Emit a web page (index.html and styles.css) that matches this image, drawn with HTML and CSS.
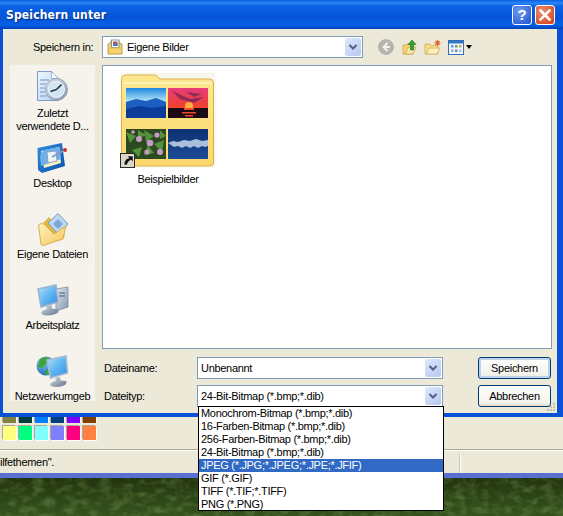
FILE: index.html
```html
<!DOCTYPE html>
<html lang="de">
<head>
<meta charset="utf-8">
<title>Speichern unter</title>
<link rel="stylesheet" href="styles.css">
</head>
<body>
<div class="screen">
  <svg class="defs" width="0" height="0">
    <defs>
      <linearGradient id="screenblue" x1="0" y1="0" x2="1" y2="1"><stop offset="0" stop-color="#b4e2fb"/><stop offset=".5" stop-color="#5fb6f2"/><stop offset="1" stop-color="#2f8ee0"/></linearGradient>
      <linearGradient id="steel" x1="0" y1="0" x2="1" y2="1"><stop offset="0" stop-color="#e3e9f2"/><stop offset="1" stop-color="#8494ac"/></linearGradient>
      <linearGradient id="stand" x1="0" y1="0" x2="1" y2="1"><stop offset="0" stop-color="#dde3ea"/><stop offset="1" stop-color="#5f7088"/></linearGradient>
      <linearGradient id="paper" x1="0" y1="0" x2="1" y2="1"><stop offset="0" stop-color="#eef5fd"/><stop offset="1" stop-color="#b7d0ee"/></linearGradient>
      <linearGradient id="yellow" x1="0" y1="0" x2="1" y2="1"><stop offset="0" stop-color="#fff3bf"/><stop offset="1" stop-color="#f3c659"/></linearGradient>
      <linearGradient id="dtblue" x1="0" y1="0" x2="1" y2="1"><stop offset="0" stop-color="#2e8fe0"/><stop offset="1" stop-color="#0d4ea8"/></linearGradient>
      <radialGradient id="globe" cx=".35" cy=".3" r=".8"><stop offset="0" stop-color="#7cc6ee"/><stop offset="1" stop-color="#1c5fb0"/></radialGradient>
      <linearGradient id="fold" x1="0" y1="0" x2="0" y2="1"><stop offset="0" stop-color="#fde88f"/><stop offset="1" stop-color="#fbd76c"/></linearGradient>
      <linearGradient id="sky" x1="0" y1="0" x2="0" y2="1"><stop offset="0" stop-color="#1c86de"/><stop offset=".4" stop-color="#a8dcf6"/><stop offset="1" stop-color="#5ea0d8"/></linearGradient>
      <linearGradient id="sun" x1="0" y1="0" x2="0" y2="1"><stop offset="0" stop-color="#e63c7a"/><stop offset=".6" stop-color="#f04030"/><stop offset="1" stop-color="#ff8030"/></linearGradient>
      <linearGradient id="wat" x1="0" y1="0" x2="0" y2="1"><stop offset="0" stop-color="#0e2f72"/><stop offset="1" stop-color="#1b4c98"/></linearGradient>
      <filter id="noise" x="0" y="0" width="100%" height="100%">
        <feTurbulence type="fractalNoise" baseFrequency=".09 .14" numOctaves="3" seed="4"/>
        <feColorMatrix type="matrix" values="0 0 0 0 .42  0 0 0 0 .62  0 0 0 0 .2  .6 0 0 0 -.25"/>
      </filter>
    </defs>
  </svg>
  <section class="dialog">
    <header class="titlebar">
      <h1 class="title">Speichern unter</h1>
      <div class="caption-buttons">
        <button class="cap cap-help">?</button>
        <button class="cap cap-close">
          <svg viewBox="0 0 20 20" width="20" height="20"><path d="M5.500 5.500l9 9M14.500 5.500l-9 9" stroke="#fff" stroke-width="2.600" stroke-linecap="square"/></svg>
        </button>
      </div>
    </header>
    <div class="client">
      <div class="toolbar">
        <span class="toolbar-label">Speichern in:</span>
        <div class="combo combo-location">
          <svg class="combo-icon" viewBox="0 0 16 16" width="16" height="16">
            <path d="M1 5h2v-2h10v2h2v10H1z" fill="#f6d36c" stroke="#b58a2c" stroke-width=".8"/>
            <rect x="4.500" y="1" width="7.500" height="7.500" fill="#fff" stroke="#5a7fa8" stroke-width=".8"/>
            <rect x="6" y="2.500" width="4.500" height="4.500" fill="#c8503c"/>
            <rect x="6" y="4.500" width="4.500" height="2.500" fill="#3f78c4"/>
            <path d="M1 9h14" stroke="#e6b84a"/>
          </svg>
          <span class="combo-text">Eigene Bilder</span>
          <span class="combo-arrow"><svg viewBox="0 0 16 18" width="16" height="18"><path d="M4.500 7l3.500 3.500L11.500 7" fill="none" stroke="#4d6185" stroke-width="2"/></svg></span>
        </div>
        <div class="tools">
          <svg class="tool-back" viewBox="0 0 16 16" width="16" height="16"><circle cx="8" cy="8" r="7.500" fill="#b5b5ae" stroke="#a3a39d" stroke-width=".6"/><path d="M9.500 4L5.500 8l4 4M6 8h6" fill="none" stroke="#f2f2ee" stroke-width="2"/></svg>
          <svg viewBox="0 0 16 16" width="16" height="16"><path d="M1 6h3l1-1h6v10H1z" fill="#f3d676" stroke="#c39f42" stroke-width=".7"/><path d="M3 15l3-7h8l-3 7z" fill="#f9e6a0" stroke="#c39f42" stroke-width=".7"/><path d="M10 1l4 4.500h-2.500V11h-3V5.500H6z" fill="#2fa32a" stroke="#1b6e1a" stroke-width=".6"/></svg>
          <svg viewBox="0 0 18 16" width="18" height="16"><path d="M1 5h5l1 1.500h7V15H1z" fill="#f6dd8c" stroke="#c9a850" stroke-width=".7"/><path d="M2 15l3-6h11l-3 6z" fill="#fbeeb6" stroke="#c9a850" stroke-width=".7"/><path d="M13.500 1v6M10.500 4h6M11.500 2l4 4M15.500 2l-4 4" stroke="#e2672a" stroke-width="1.100"/></svg>
          <div class="views">
            <svg viewBox="0 0 16 15" width="16" height="15"><rect x=".5" y=".5" width="15" height="14" fill="#f4f6fb" stroke="#2f6fb2"/><rect x="1" y="1" width="14" height="2.500" fill="#2f78c8"/><rect x="3" y="5" width="2.500" height="2.500" fill="#5a9bd0"/><rect x="7" y="5" width="2.500" height="2.500" fill="#5aa86a"/><rect x="11" y="5" width="2.500" height="2.500" fill="#d8a63c"/><rect x="3" y="9.500" width="2.500" height="2.500" fill="#a5a5b5"/><rect x="7" y="9.500" width="2.500" height="2.500" fill="#6f8fb8"/><rect x="11" y="9.500" width="2.500" height="2.500" fill="#c0c0c0"/></svg>
            <span class="views-caret"></span>
          </div>
        </div>
      </div>

      <div class="content">
        <nav class="places">
          <div class="place">
            <svg viewBox="0 0 32 34" width="32" height="34">
              <path d="M.5 1.500h14l7 7v22H.5z" fill="url(#paper)" stroke="#7f9cc4"/>
              <path d="M14.500 1.500v7h7z" fill="#fff" stroke="#7f9cc4" stroke-width=".7"/>
              <path d="M3 10h9M3 14h6M3 18h5M3 22h5M3 26h7" stroke="#8fb0dc" stroke-width="1.300"/>
              <circle cx="19.500" cy="19.500" r="11" fill="url(#steel)" stroke="#7c8798" stroke-width=".6"/>
              <circle cx="19.500" cy="19.500" r="8" fill="#cfe6f5" stroke="#f3f6f8"/>
              <path d="M19.500 19.500l5-5M19.500 19.500l-6 2" stroke="#2c3444" stroke-width="1.600"/>
            </svg>
            <span>Zuletzt<br>verwendete D...</span>
          </div>
          <div class="place">
            <svg viewBox="0 0 32 34" width="32" height="34">
              <path d="M.5 7L25 2l3 23L5 32 1 29z" fill="url(#dtblue)"/>
              <path d="M4 10l18-4 2 16-17 5z" fill="#f9f3c8"/>
              <path d="M3 16q1-8 9-8l11-2 1 12-9 3-8 3-3 1z" fill="#6fb0e8"/>
              <path d="M10 11l9-1 1 10-9 2z" fill="#eef4f8" stroke="#8aa6c0"/>
              <path d="M15 16l11-6" stroke="#7e9cc0" stroke-width="1.600"/>
              <circle cx="28" cy="9" r="2" fill="#c8303a"/>
            </svg>
            <span>Desktop</span>
          </div>
          <div class="place">
            <svg viewBox="0 0 32 34" width="32" height="34">
              <path d="M6 11l15 18 7-5L12 5z" fill="#e2b544"/>
              <path d="M11 11L21 1.500 31 12 21 22z" fill="#bcd8f2" stroke="#8098b8"/>
              <path d="M16 12l5-5 5 5-5 5z" fill="#7ea7d8"/>
              <path d="M1.500 13q3-3 6-.5L17 22l12-8-3 13-20 6.500-2-1z" fill="url(#yellow)" stroke="#c99f3c" stroke-width=".8"/>
            </svg>
            <span>Eigene Dateien</span>
          </div>
          <div class="place">
            <svg viewBox="0 0 34 34" width="34" height="34">
              <path d="M20 6l12-2v20l-12 4z" fill="url(#steel)" stroke="#7f8ca8" stroke-width=".8"/>
              <path d="M23 10h6M23 13h6" stroke="#6f7d99" stroke-width="1.300"/>
              <path d="M2 6L20 2l2 17-17 5z" fill="url(#screenblue)" stroke="#9fb2cc" stroke-width="1.500"/>
              <path d="M10 23l1 3q-5 1-6 4 1 2.500 6 2.500 7 0 11-3l1-3-7-1-.5-4z" fill="url(#stand)"/>
            </svg>
            <span>Arbeitsplatz</span>
          </div>
          <div class="place">
            <svg viewBox="0 0 34 34" width="34" height="34">
              <circle cx="10" cy="12" r="9.500" fill="url(#globe)"/>
              <path d="M4 5q5-3 9-.5L11 9l-5 5-4-1zM9 16l5 1-1 4-3 0z" fill="#3da63a"/>
              <path d="M11 6l19-4 1.500 17-17 5z" fill="url(#screenblue)" stroke="#a8bad2" stroke-width="1.600"/>
              <path d="M19 24l1 3q-5 1-6 3.500 1 2.500 6 2.500 7 0 10-3l.5-3-6-.5-.5-4z" fill="url(#stand)"/>
            </svg>
            <span class="clip">Netzwerkumgeb</span>
          </div>
        </nav>

        <div class="main">
          <div class="filelist">
            <figure class="file">
              <svg viewBox="0 0 96 96" width="96" height="96">
                <rect x=".5" y=".5" width="95" height="95" fill="#f7f5ec"/>
                <path d="M1.500 8q0-5 5-5h28q3 0 5 4h50q4 0 4 4v80q0 3-4 3H5q-3.500 0-3.500-3z" fill="url(#fold)" stroke="#d9b04a"/>
                <path d="M3 11h89" stroke="#fff3b8" stroke-width="2"/>
                <rect x="6" y="16" width="40" height="30" fill="url(#sky)"/>
                <path d="M6 30l10-3 10 2 10-3 10 4v16H6z" fill="#1d5fc0"/>
                <path d="M6 37l14-3 12 2 14-2v12H6z" fill="#0c3b9a"/>
                <rect x="48" y="16" width="40" height="30" fill="url(#sun)"/>
                <path d="M52 19l18 8 14-2-10 6-14-4zM66 20l16 2-8 3z" fill="#8e2a58"/>
                <circle cx="69" cy="34" r="4" fill="#ffb040"/>
                <path d="M48 36h40v10H48z" fill="#1d0a14"/>
                <path d="M64 36h10v2H64zM62 40h14v1.500H62zM65 43h8v1.500h-8z" fill="#f04828"/>
                <rect x="6" y="57" width="40" height="30" fill="#2b4a1f"/>
                <path d="M6 60l10 4-6 7zM18 58l8 5-8 4zM24 58l10 6-8 6zM34 72l10-4-2 12zM12 78l10-3-3 10zM28 73l6 8-10 2zM40 58l6 6-6 3z" fill="#55903c"/>
                <g fill="#c89ac8"><circle cx="19" cy="67" r="3"/><circle cx="30" cy="71" r="3.300"/><circle cx="37" cy="63" r="2.600"/><circle cx="27" cy="80" r="2.600"/><circle cx="40" cy="80" r="3"/><circle cx="13" cy="60" r="1.800"/></g>
                <rect x="48" y="57" width="40" height="30" fill="url(#wat)"/>
                <path d="M48 71l5-2 5 1 6-2 6 1 6-2 6 2 6-1v6l-3 1-3-1-4 2-4-2-4 2-4-2-4 2-4-2-4 1z" fill="#a8bedd"/>
                <rect x=".5" y="81.500" width="14" height="14" fill="#d8d6c8" stroke="#2a2a20"/>
                <path d="M4 93q0-6 5-7l-2-2h6v6l-2-2q-3 1-4 5z" fill="#111" stroke="#fff" stroke-width=".5"/>
              </svg>
              <figcaption>Beispielbilder</figcaption>
            </figure>
          </div>
          <div class="form">
            <label class="form-label">Dateiname:</label>
            <div class="combo"><span class="combo-text">Unbenannt</span><span class="combo-arrow"><svg viewBox="0 0 16 18" width="16" height="18"><path d="M4.500 7l3.500 3.500L11.500 7" fill="none" stroke="#4d6185" stroke-width="2"/></svg></span></div>
            <button class="btn btn-default">Speichern</button>
            <label class="form-label">Dateityp:</label>
            <div class="combo"><span class="combo-text">24-Bit-Bitmap (*.bmp;*.dib)</span><span class="combo-arrow"><svg viewBox="0 0 16 18" width="16" height="18"><path d="M4.500 7l3.500 3.500L11.500 7" fill="none" stroke="#4d6185" stroke-width="2"/></svg></span></div>
            <button class="btn">Abbrechen</button>
          </div>
        </div>
      </div>
      <svg class="grip" viewBox="0 0 10 10" width="10" height="10"><g fill="#c5c2b0"><rect x="7" y="1" width="2" height="2"/><rect x="4" y="4" width="2" height="2"/><rect x="7" y="4" width="2" height="2"/><rect x="1" y="7" width="2" height="2"/><rect x="4" y="7" width="2" height="2"/><rect x="7" y="7" width="2" height="2"/></g></svg>
    </div>
  </section>

  <section class="paint">
    <div class="palette">
      <div class="swatches swatches-dark">
        <i class="c-olive"></i><i class="c-teal"></i><i class="c-azure"></i><i class="c-navy"></i><i class="c-violet"></i><i class="c-brown"></i>
      </div>
      <div class="swatches">
        <i class="c-yellow"></i><i class="c-mint"></i><i class="c-cyan"></i><i class="c-peri"></i><i class="c-pink"></i><i class="c-orange"></i>
      </div>
    </div>
    <div class="statusbar">
      <span class="status-text">ilfethemen".</span>
      <span class="status-div"></span>
    </div>
  </section>
  <div class="grass">
    <svg class="grass-noise" width="563" height="38"><rect width="563" height="38" filter="url(#noise)"/></svg>
  </div>

  <ul class="dropdown">
    <li>Monochrom-Bitmap (*.bmp;*.dib)</li>
    <li>16-Farben-Bitmap (*.bmp;*.dib)</li>
    <li>256-Farben-Bitmap (*.bmp;*.dib)</li>
    <li>24-Bit-Bitmap (*.bmp;*.dib)</li>
    <li class="selected">JPEG (*.JPG;*.JPEG;*.JPE;*.JFIF)</li>
    <li>GIF (*.GIF)</li>
    <li>TIFF (*.TIF;*.TIFF)</li>
    <li>PNG (*.PNG)</li>
  </ul>
</div>
</body>
</html>
```

FILE: styles.css
```css
* { box-sizing: border-box; }
html, body { margin: 0; padding: 0; }
body { font: 11px/13px "Liberation Sans", Arial, sans-serif; letter-spacing: -.3px; color: #000; background: #2e4a18; }
.screen { position: relative; width: 563px; height: 516px; overflow: hidden; display: flex; flex-direction: column; }
.defs { position: absolute; }

.dialog { height: 417px; flex: none; display: flex; flex-direction: column; background: #0a50d8; padding: 0 6px 4px 3px; }
.titlebar { height: 29px; flex: none; margin: 0 -6px 0 -3px; padding: 5px 8px 0 6px; display: flex; justify-content: space-between; align-items: flex-start;
  background: linear-gradient(#0a5ee0 0, #2a86f4 3px, #0b62e6 6px, #0454d8 18px, #0660e6 25px, #0340b8 29px); }
.title { margin: 0; font: bold 12px/21px "DejaVu Sans Condensed", "DejaVu Sans", sans-serif; letter-spacing: .15px; color: #fff; text-shadow: 1px 1px 1px #0a2f8a; }
.caption-buttons { display: flex; gap: 3px; }
.cap { width: 20px; height: 20px; padding: 0; border: 1px solid #fff; border-radius: 3px; display: flex; align-items: center; justify-content: center; color: #fff; }
.cap-help { font: bold 15px/18px "Liberation Sans", sans-serif; background: radial-gradient(circle at 35% 30%, #6f9df0, #2e5fd6 80%); }
.cap-close { background: radial-gradient(circle at 35% 30%, #ee8d6c, #d94a26 80%); }
.cap-close svg { margin: -1px; }

.client { position: relative; flex: 1; background: #ece9d8; display: flex; flex-direction: column; }
.toolbar { height: 22px; margin-top: 7px; flex: none; display: flex; align-items: center; }
.toolbar-label { width: 99px; padding-left: 30px; white-space: nowrap; }
.tools { display: flex; align-items: center; gap: 6px; margin-left: 15px; }
.tool-back { margin-right: 2px; }
.views { display: flex; align-items: center; gap: 2px; }
.views-caret { width: 0; height: 0; border: 3px solid transparent; border-top: 4px solid #000; border-bottom: 0; }

.combo { height: 22px; width: 246px; background: #fff; border: 1px solid #7f9db9; display: flex; align-items: center; padding-left: 3px; }
.combo-location { width: 261px; padding-left: 4px; gap: 4px; }
.combo-text { flex: 1; white-space: nowrap; overflow: hidden; }
.combo-arrow { width: 16px; height: 18px; margin-right: 1px; border-radius: 2px; background: linear-gradient(135deg, #dfe8fb, #b4c8f0); display: flex; }

.content { display: flex; margin-top: 7px; padding-left: 7px; }
.places { width: 85px; height: 336px; flex: none; background: #f5f3ec; display: flex; flex-direction: column; align-items: center; padding-top: 5px; }
.place { height: 71px; flex: none; width: 100%; display: flex; flex-direction: column; align-items: center; text-align: center; }
.place svg { display: block; flex: none; margin-bottom: 2px; }
.place:first-child svg { margin-bottom: 3px; }
.place .clip { display: block; width: 85px; white-space: nowrap; overflow: hidden; }

.main { margin-left: 7px; width: 450px; }
.filelist { height: 284px; width: 450px; background: #fff; border: 1px solid #7f9db9; padding: 6px 0 0 17px; }
.file { margin: 0; width: 96px; text-align: center; }
.file svg { display: block; }
.file figcaption { margin-top: 5px; }

.form { display: grid; grid-template-columns: 95px 246px 108px; row-gap: 6px; grid-template-rows: 22px 22px; margin-top: 8px; align-items: center; }
.form .btn { margin-left: 35px; }
.form-label { padding-left: 2px; }
.btn { width: 73px; height: 22px; padding: 0; font: inherit; letter-spacing: inherit; color: #000; background: linear-gradient(#fff, #f3f2ea 85%, #dcd8c8); border: 1px solid #003c74; border-radius: 3px; }
.btn-default { box-shadow: inset 0 0 0 2px #bcd0ef; }
.grip { position: absolute; right: 1px; bottom: 1px; }

.paint { height: 56px; flex: none; background: #ece9d8; display: flex; flex-direction: column; }
.palette { height: 33px; flex: none; display: flex; flex-direction: column; gap: 3px; border-bottom: 1px solid #a9a796; }
.swatches { display: flex; gap: 3px; padding-left: 3px; }
.swatches i { display: block; width: 13px; height: 14px; box-shadow: -1px -1px 0 #aca899, 1px 1px 0 #fff; }
.swatches-dark { height: 6px; overflow: hidden; }
.swatches-dark i { height: 6px; }
.c-olive { background: #808040; } .c-teal { background: #004040; } .c-azure { background: #0080ff; }
.c-navy { background: #004080; } .c-violet { background: #8000ff; } .c-brown { background: #804000; }
.c-yellow { background: #ffff80; } .c-mint { background: #00ff80; } .c-cyan { background: #80ffff; }
.c-peri { background: #8080ff; } .c-pink { background: #ff0080; } .c-orange { background: #ff8040; }
.statusbar { flex: 1; display: flex; align-items: center; border-top: 1px solid #fff; position: relative; }
.status-div { position: absolute; left: 459px; top: 3px; bottom: 0; border-left: 1px solid #c8c5b2; border-right: 1px solid #fff; width: 2px; }

.grass { flex: 1; border-top: 5px solid #5a70d0; overflow: hidden; background: linear-gradient(#22340e 0, #2c4516 50%, #36521e 100%); }
.grass-noise { display: block; }

.dropdown { position: absolute; left: 198px; top: 406px; width: 246px; height: 105px; margin: 0; padding: 0; list-style: none; background: #fff; border: 1px solid #000; }
.dropdown li { height: 13px; padding-left: 2px; line-height: 13px; white-space: nowrap; }
.dropdown .selected { background: #316ac5; color: #fff; }
```
